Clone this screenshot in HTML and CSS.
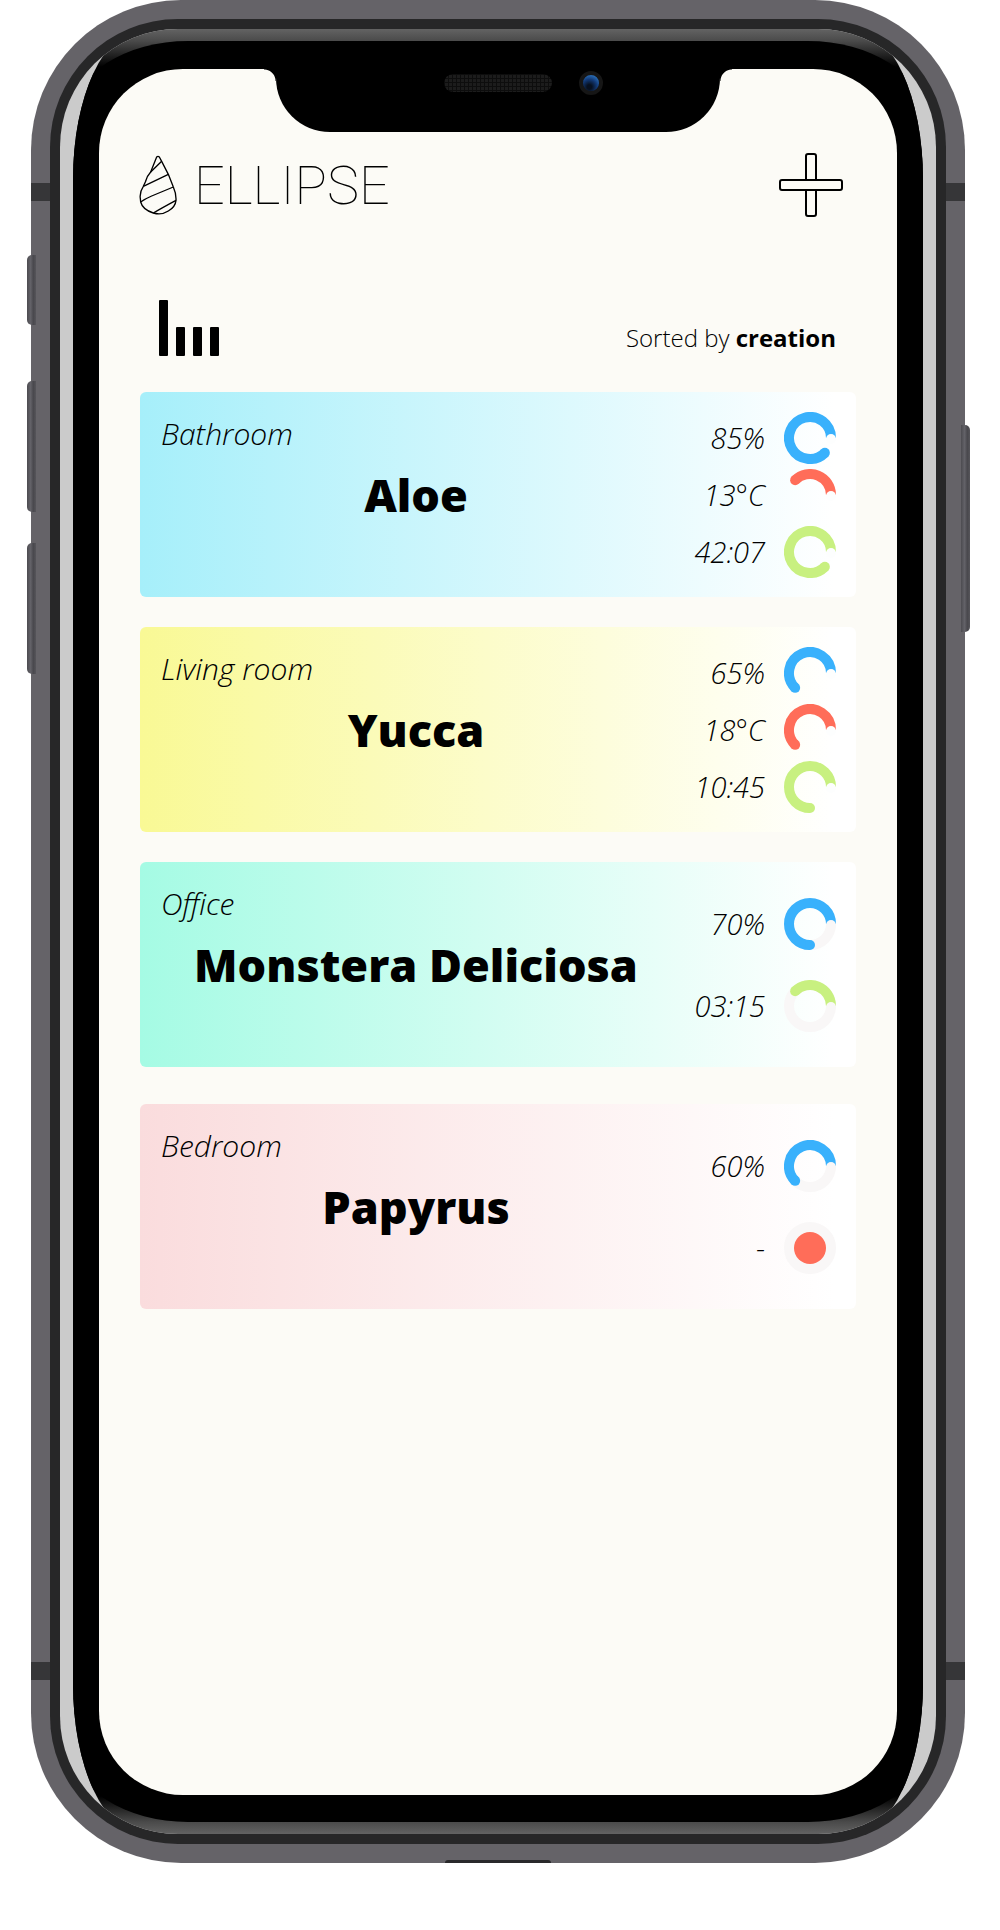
FILE: index.html
```html
<!DOCTYPE html>
<html lang="en">
<head>
<meta charset="utf-8">
<meta name="viewport" content="width=device-width, initial-scale=1">
<title>Ellipse</title>
<link rel="stylesheet" href="styles.css">
</head>
<body>
<svg class="defs" aria-hidden="true">
  <symbol id="arc-135" viewBox="-26 -26 52 52"><path d="M21 0A21 21 0 0 0-14.85-14.85"/><circle class="cap" cx="-14.85" cy="-14.85" r="5"/></symbol>
  <symbol id="arc-225" viewBox="-26 -26 52 52"><path d="M21 0A21 21 0 1 0-14.85 14.85"/><circle class="cap" cx="-14.85" cy="14.85" r="5"/></symbol>
  <symbol id="arc-270" viewBox="-26 -26 52 52"><path d="M21 0A21 21 0 1 0 0 21"/><circle class="cap" cx="0" cy="21" r="5"/></symbol>
  <symbol id="arc-315" viewBox="-26 -26 52 52"><path d="M21 0A21 21 0 1 0 14.85 14.85"/><circle class="cap" cx="14.85" cy="14.85" r="5"/></symbol>
</svg>

<div class="phone">
  <span class="key key--mute"></span>
  <span class="key key--up"></span>
  <span class="key key--down"></span>
  <span class="key key--power"></span>
  <span class="port"></span>
  <div class="band"><div class="glare"><div class="face"><div class="bezel">
    <div class="screen">
      <div class="notch">
        <span class="speaker"></span>
        <span class="camera"></span>
      </div>

      <header class="header">
        <a class="brand" href="#">
          <svg class="brand-mark" viewBox="54 44 120 183" aria-hidden="true">
            <path d="M110 50L92 95Q80 108 76 125L70 138Q58 156 61 175L62 185Q68 208 100 218Q125 225 145 212Q166 200 168 180Q169 160 160 140L145 102L125 63L118 50Q114 46 110 50Z"/>
            <path d="M92 95L125 63M70 138L145 102M62 185Q74 176 95 167L160 140M100 218Q125 203 168 180"/>
          </svg>
          <span class="brand-name">ELLIPSE</span>
        </a>
        <button class="icon-button" type="button" aria-label="Add plant">
          <svg width="64" height="64" viewBox="0 0 64 64" aria-hidden="true">
            <rect class="plus-bar" x="27" y="1" width="10" height="62" rx="2"/>
            <rect class="plus-bar" x="1" y="27" width="62" height="10" rx="2"/>
          </svg>
        </button>
      </header>

      <main>
        <div class="toolbar">
          <button class="icon-button" type="button" aria-label="Change sorting">
            <svg width="60" height="56" viewBox="0 0 60 56" aria-hidden="true">
              <rect width="9" height="56" rx="1"/>
              <rect x="17" y="27" width="9" height="29" rx="1"/>
              <rect x="34" y="27" width="9" height="29" rx="1"/>
              <rect x="51" y="27" width="9" height="29" rx="1"/>
            </svg>
          </button>
          <p class="sorting">Sorted by <strong>creation</strong></p>
        </div>

        <section class="cards">
          <article class="card card--blue">
            <p class="room">Bathroom</p>
            <h2 class="plant">Aloe</h2>
            <ul class="readings">
              <li class="reading water">85% <svg class="ring"><use href="#arc-315"/><circle class="bite" cx="47" cy="27" r="5"/></svg></li>
              <li class="reading heat">13°C <svg class="ring"><use href="#arc-135"/><circle class="bite" cx="47" cy="27" r="5"/></svg></li>
              <li class="reading light">42:07 <svg class="ring"><use href="#arc-315"/><circle class="bite" cx="47" cy="27" r="5"/></svg></li>
            </ul>
          </article>

          <article class="card card--yellow">
            <p class="room">Living room</p>
            <h2 class="plant">Yucca</h2>
            <ul class="readings">
              <li class="reading water">65% <svg class="ring"><use href="#arc-225"/><circle class="bite" cx="47" cy="27" r="5"/></svg></li>
              <li class="reading heat">18°C <svg class="ring"><use href="#arc-225"/><circle class="bite" cx="47" cy="27" r="5"/></svg></li>
              <li class="reading light">10:45 <svg class="ring"><use href="#arc-270"/><circle class="bite" cx="47" cy="27" r="5"/></svg></li>
            </ul>
          </article>

          <article class="card card--green">
            <p class="room">Office</p>
            <h2 class="plant">Monstera Deliciosa</h2>
            <ul class="readings readings--pair">
              <li class="reading water">70% <svg class="ring"><circle class="track" cx="26" cy="26" r="21"/><use href="#arc-270"/><circle class="bite" cx="47" cy="27" r="5"/></svg></li>
              <li class="reading light">03:15 <svg class="ring"><circle class="track" cx="26" cy="26" r="21"/><use href="#arc-135"/><circle class="bite" cx="47" cy="27" r="5"/></svg></li>
            </ul>
          </article>

          <article class="card card--pink card--apart">
            <p class="room">Bedroom</p>
            <h2 class="plant">Papyrus</h2>
            <ul class="readings readings--pair">
              <li class="reading water">60% <svg class="ring"><circle class="track" cx="26" cy="26" r="21"/><use href="#arc-225"/><circle class="bite" cx="47" cy="27" r="5"/></svg></li>
              <li class="reading heat">- <svg class="ring"><circle class="track" cx="26" cy="26" r="21"/><circle class="dot" cx="26" cy="26" r="16"/></svg></li>
            </ul>
          </article>
        </section>
      </main>
    </div>
  </div></div></div></div>
</div>
</body>
</html>
```
FILE: styles.css
```css
* {
  box-sizing: border-box;
}

body {
  margin: 0;
  background: #fff;
  color: #000;
  font-family: "Open Sans", "Noto Sans", sans-serif;
  font-weight: 300;
}

h2,
p,
ul {
  margin: 0;
  padding: 0;
}

.defs {
  position: absolute;
  width: 0;
  height: 0;
}

/* Phone body, from the metal rim inwards */
.phone {
  position: relative;
  display: flex;
  flex-direction: column;
  margin: 0 35px 0 31px;
  padding: 19px;
  aspect-ratio: 934 / 1863;
  border-radius: 150px;
  background:
    linear-gradient(#363638, #363638) 0 183px / 100% 18px no-repeat,
    linear-gradient(#363638, #363638) 0 calc(100% - 183px) / 100% 18px no-repeat,
    #656368;
}

.band,
.glare,
.face,
.bezel,
.screen {
  display: flex;
  flex-direction: column;
  flex: 1;
}

.band {
  padding: 10px;
  border-radius: 128px;
  background: #272728;
}

.glare {
  padding: 0 13px;
  border-radius: 118px;
  background: #cbcbcb;
  overflow: hidden;
}

.face {
  padding: 12px 0;
  border-radius: 70px / 150px;
  background: linear-gradient(#636363, #4a4a4a 12px, #000 38px, #000 calc(100% - 38px), #4a4a4a calc(100% - 12px), #636363);
  overflow: hidden;
}

.bezel {
  padding: 28px 26px 27px;
  border-radius: 115px / 75px;
  background: #000;
}

.screen {
  padding: 0 41px 60px;
  border-radius: 84px;
  background: #fcfbf6;
}

.key {
  position: absolute;
  width: 9px;
  left: -4px;
  border-radius: 5px 0 0 5px;
  background: linear-gradient(90deg, #4c4b50, #636268 40%, #49484d 70%, #56555a);
}

.key--mute {
  top: 255px;
  height: 70px;
}

.key--up {
  top: 381px;
  height: 131px;
}

.key--down {
  top: 543px;
  height: 131px;
}

.key--power {
  top: 425px;
  right: -5px;
  left: auto;
  height: 207px;
  border-radius: 0 5px 5px 0;
}

.port {
  position: absolute;
  bottom: 0;
  left: 50%;
  width: 106px;
  height: 3px;
  margin-left: -53px;
  border-radius: 3px 3px 0 0;
  background: #29292b;
}

.notch {
  position: relative;
  display: flex;
  align-items: flex-start;
  justify-content: center;
  width: 444px;
  height: 63px;
  margin: 0 auto;
  padding-top: 5px;
  border-radius: 0 0 54px 54px;
  background: #000;
}

/* Small inverse corners where the notch meets the top edge */
.notch::before,
.notch::after {
  content: "";
  position: absolute;
  top: 0;
  left: -12px;
  width: 12px;
  height: 12px;
  background: radial-gradient(circle at 0 100%, transparent 11px, #000 12px);
}

.notch::after {
  left: 100%;
  background: radial-gradient(circle at 100% 100%, transparent 11px, #000 12px);
}

.speaker {
  width: 108px;
  height: 18px;
  border-radius: 9px;
  background:
    repeating-linear-gradient(90deg, #0d0d0d 0 1px, transparent 1px 4px),
    repeating-linear-gradient(#0d0d0d 0 1px, transparent 1px 4px),
    #1c1c1c;
}

.camera {
  position: absolute;
  top: 2px;
  right: 117px;
  width: 24px;
  height: 24px;
  border: 4px solid #161616;
  border-radius: 50%;
  background: radial-gradient(circle at 40% 75%, #07101f 15%, #123a78 50%, #2b6fb8 80%);
}

.header {
  display: flex;
  align-items: center;
  justify-content: space-between;
  margin-top: 21px;
  padding-right: 13px;
}

.brand {
  display: flex;
  align-items: center;
  gap: 16px;
  color: #000;
  text-decoration: none;
}

.brand-mark {
  width: 40px;
  height: 61px;
  margin-left: -2px;
  fill: none;
  stroke: #000;
  stroke-width: 4;
  stroke-linejoin: round;
}

.brand-name {
  padding-top: 2px;
  font-family: Roboto, Inter, sans-serif;
  font-size: 54px;
  font-weight: 100;
  line-height: 60px;
}

.icon-button {
  display: block;
  padding: 0;
  border: 0;
  background: none;
  cursor: pointer;
}

.icon-button svg {
  display: block;
}

.plus-bar {
  fill: #fcfbf6;
  stroke: #000;
  stroke-width: 2;
}

.toolbar {
  display: flex;
  align-items: flex-end;
  justify-content: space-between;
  margin-top: 83px;
  padding: 0 20px 0 19px;
}

.sorting {
  font-size: 24px;
  line-height: 36px;
}

.sorting strong {
  font-weight: 700;
}

.cards {
  display: flex;
  flex-direction: column;
  gap: 30px;
  margin-top: 36px;
}

.card {
  display: grid;
  grid-template-columns: 1fr 164px;
  min-height: 205px;
  border-radius: 6px;
}

.card--blue {
  background: linear-gradient(90deg, #a6effa, #fff 97%);
}

.card--yellow {
  background: linear-gradient(90deg, #f9f995, #fff 97%);
}

.card--green {
  background: linear-gradient(90deg, #a5fbe4, #fff 97%);
}

.card--pink {
  background: linear-gradient(90deg, #fadcdd, #fff 97%);
}

.card--apart {
  margin-top: 7px;
}

/* The room label and the plant name share one cell */
.room,
.plant {
  grid-area: 1 / 1;
}

.room {
  padding: 20px 0 0 21px;
  font-size: 30px;
  font-style: italic;
  line-height: 44px;
}

.plant {
  align-self: center;
  font-size: 45px;
  font-weight: 800;
  line-height: 60px;
  text-align: center;
}

.readings {
  display: flex;
  flex-direction: column;
  justify-content: center;
  gap: 5px;
  padding-right: 20px;
  list-style: none;
}

.readings--pair {
  gap: 30px;
}

.reading {
  display: flex;
  align-items: center;
  justify-content: flex-end;
  gap: 19px;
  font-size: 29px;
  font-style: italic;
  line-height: 44px;
}

.ring {
  flex: none;
  width: 52px;
  height: 52px;
  fill: none;
  stroke: currentColor;
  stroke-width: 10;
}

.water .ring {
  color: #39b1fc;
}

.heat .ring {
  color: #ff6d59;
}

.light .ring {
  color: #c8f080;
}

.cap {
  fill: currentColor;
  stroke: none;
}

.ring .bite {
  fill: #fdfefe;
  stroke: none;
}

.ring .track {
  stroke: #f9f7f7;
}

.ring .track ~ .bite {
  fill: #f9f7f7;
}

.ring .dot {
  fill: currentColor;
  stroke: none;
}
```
